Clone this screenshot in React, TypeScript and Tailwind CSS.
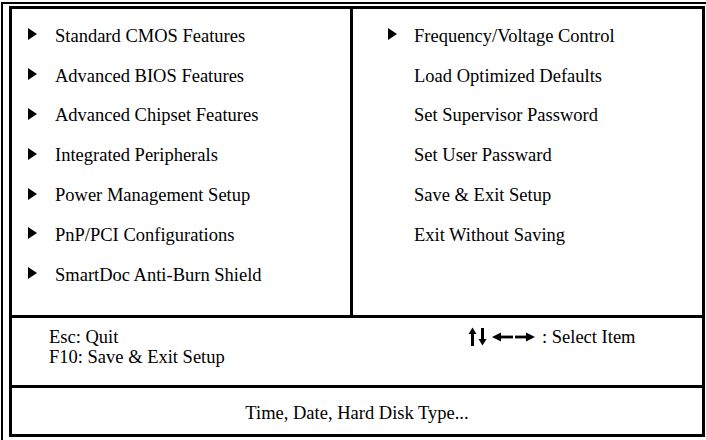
import React from "react";

const Tri = () => (
  <svg width="9" height="12" viewBox="0 0 9 12" className="block">
    <polygon points="0,0 9,6 0,12" fill="#000" />
  </svg>
);

const leftItems = [
  "Standard CMOS Features",
  "Advanced BIOS Features",
  "Advanced Chipset Features",
  "Integrated Peripherals",
  "Power Management Setup",
  "PnP/PCI Configurations",
  "SmartDoc Anti-Burn Shield",
];

const rightItems: { label: string; arrow: boolean }[] = [
  { label: "Frequency/Voltage Control", arrow: true },
  { label: "Load Optimized Defaults", arrow: false },
  { label: "Set Supervisor Password", arrow: false },
  { label: "Set User Passward", arrow: false },
  { label: "Save & Exit Setup", arrow: false },
  { label: "Exit Without Saving", arrow: false },
];

const Arrows = () => (
  <svg width="68" height="20" viewBox="0 0 68 20" className="block">
    {/* up arrow */}
    <polygon points="0.5,7 4.5,0.5 8.5,7" fill="#000" />
    <rect x="3" y="6" width="3" height="13" fill="#000" />
    {/* down arrow */}
    <rect x="13" y="1" width="3" height="12" fill="#000" />
    <polygon points="10.5,12 14.5,18.5 18.5,12" fill="#000" />
    {/* left arrow */}
    <polygon points="24,10 33,5.5 33,14.5" fill="#000" />
    <rect x="32" y="8.6" width="13" height="2.8" fill="#000" />
    {/* right arrow */}
    <rect x="47" y="8.6" width="13" height="2.8" fill="#000" />
    <polygon points="67,10 58,5.5 58,14.5" fill="#000" />
  </svg>
);

export default function App() {
  return (
    <div
      className="w-[706px] h-[440px] bg-white overflow-hidden pt-[2px] pl-[1px] text-black"
      style={{ fontFamily: '"Liberation Serif", "Times New Roman", serif' }}
    >
      <div className="h-[438px] border-l-[2px] border-t-[2px] border-black pl-[6px] pt-[2px]">
        <div className="w-[696px] h-[431px] border-[3px] border-black flex flex-col text-[18.5px]">
          {/* top menu area */}
          <div className="h-[309px] border-b-[3px] border-black flex">
            <div className="w-[341px] border-r-[3px] border-black pt-[7px] pl-[16px] flex flex-col">
              {leftItems.map((t) => (
                <div key={t} className="h-[39.8px] flex items-center">
                  <div className="w-[27px] flex items-center -mt-[3px]">
                    <Tri />
                  </div>
                  <span className="leading-[20px]">{t}</span>
                </div>
              ))}
            </div>
            <div className="flex-1 pt-[7px] pl-[35px] flex flex-col">
              {rightItems.map((it) => (
                <div key={it.label} className="h-[39.8px] flex items-center">
                  <div className="w-[26px] flex items-center -mt-[3px]">
                    {it.arrow ? <Tri /> : null}
                  </div>
                  <span className="leading-[20px]">{it.label}</span>
                </div>
              ))}
            </div>
          </div>
          {/* help area */}
          <div className="h-[70px] border-b-[3px] border-black flex pt-[9px]">
            <div className="w-[456px] pl-[37px] leading-[20px]">
              <div>Esc: Quit</div>
              <div>F10: Save &amp; Exit Setup</div>
            </div>
            <div className="flex items-start">
              <Arrows />
              <span className="ml-[6px] leading-[20px]">: Select Item</span>
            </div>
          </div>
          {/* description area */}
          <div className="flex-1 flex items-center justify-center pt-[3px]">
            <span className="leading-[20px]">Time, Date, Hard Disk Type...</span>
          </div>
        </div>
      </div>
    </div>
  );
}
